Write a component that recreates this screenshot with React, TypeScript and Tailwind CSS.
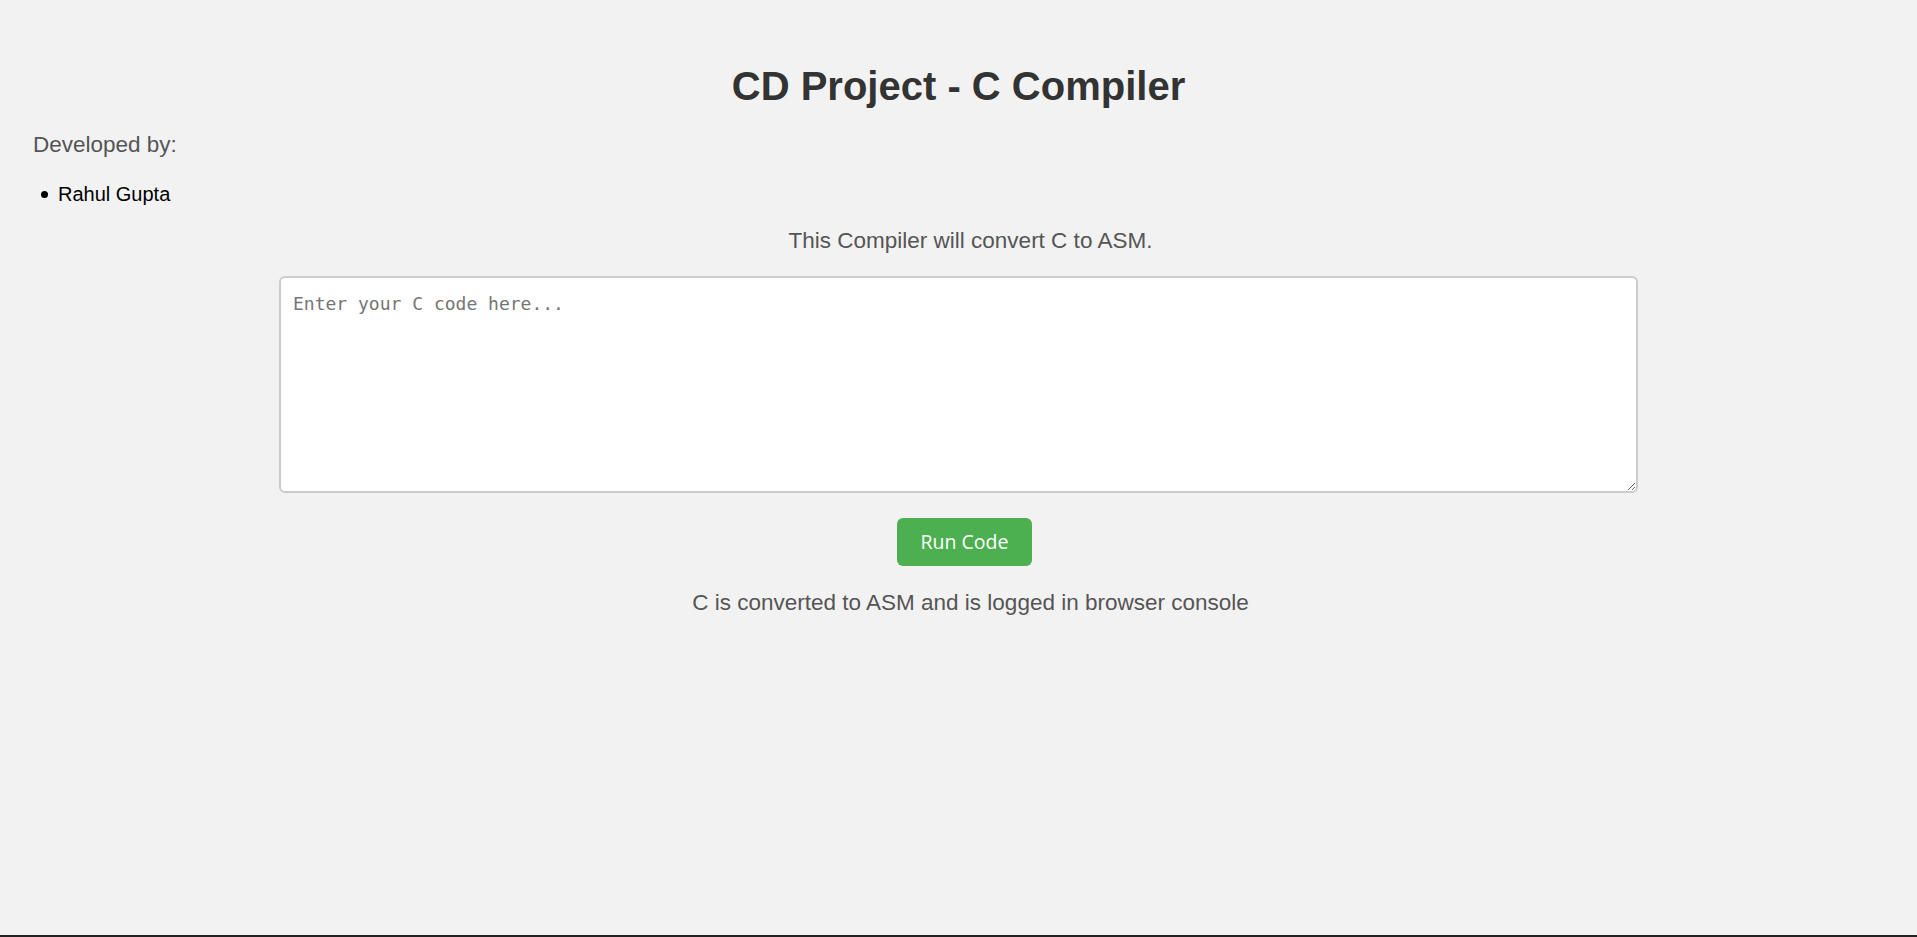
import React, { useState } from 'react';

export default function App() {
    const [code, setCode] = useState('');

    return (
        <div className="min-h-[937px] bg-[#f2f2f2] flex flex-col font-['Liberation_Sans',Arial,sans-serif]">
            <div className="flex-1 px-[33px]">
                {/* Heading */}
                <h1 className="mt-[62px] text-center text-[40px] leading-[48px] font-bold text-[#333]">
                    CD Project - C Compiler
                </h1>

                {/* Authors */}
                <p className="mt-[21px] text-[22.5px] leading-[27px] text-[#555]">Developed by:</p>
                <ul className="mt-[24px] pl-[8px]">
                    <li className="flex items-center text-[20px] leading-[24px] text-black">
                        <span className="w-[7px] h-[7px] rounded-full bg-black mr-[10px]" />
                        Rahul Gupta
                    </li>
                </ul>

                <p className="mt-[21px] pl-[24px] text-center text-[22.5px] leading-[27px] text-[#555]">
                    This Compiler will convert C to ASM.
                </p>

                {/* Code input */}
                <textarea
                    value={code}
                    onChange={(e) => setCode(e.target.value)}
                    placeholder="Enter your C code here..."
                    className="block mx-auto mt-[22px] w-[1359px] h-[217px] bg-white border-2 border-[#ccc] rounded-[6px] px-[12px] pt-[12px] font-['DejaVu_Sans_Mono',monospace] text-[18px] text-[#222] placeholder:text-[#757575] outline-none"
                />

                <div className="flex justify-center pl-[12px] mt-[25px]">
                    <button
                        onClick={() => console.log(code)}
                        className="w-[135px] h-[48px] bg-[#4caf50] rounded-[6px] text-white text-[19.5px] font-['Open_Sans',sans-serif]"
                    >
                        Run Code
                    </button>
                </div>

                <p className="mt-[22.5px] pl-[24px] text-center text-[22.5px] leading-[27px] text-[#555]">
                    C is converted to ASM and is logged in browser console
                </p>
            </div>

            {/* bottom edge */}
            <div className="h-[2px] bg-[#222]" />
        </div>
    );
}
